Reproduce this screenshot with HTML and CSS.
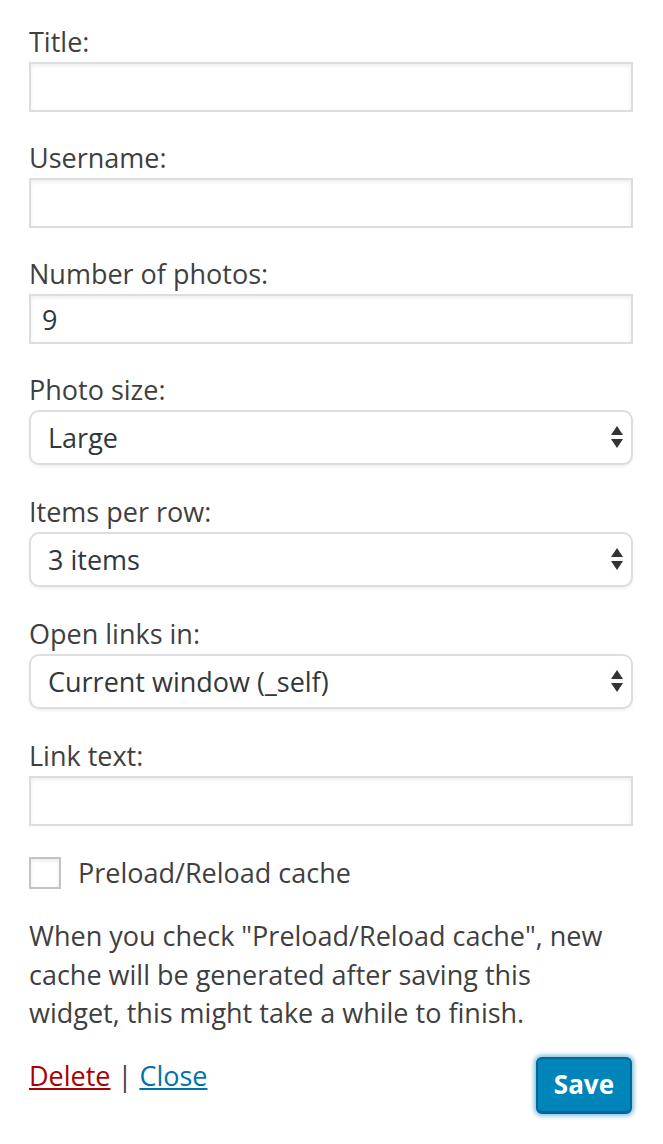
FILE: index.html
```html
<!DOCTYPE html>
<html lang="en">
<head>
  <meta charset="UTF-8" />
  <title>Instagram Widget</title>
  <link rel="stylesheet" href="styles.css">
</head>
<body>
  <div class="widget-form">
    <p class="field">
      <label for="title">Title:</label>
      <input type="text" id="title" class="text-input" />
    </p>
    <p class="field">
      <label for="username">Username:</label>
      <input type="text" id="username" class="text-input" />
    </p>
    <p class="field">
      <label for="number">Number of photos:</label>
      <input type="text" id="number" class="text-input" value="9" />
    </p>
    <p class="field field-select">
      <label for="size">Photo size:</label>
      <span class="select-wrap">
        <select id="size"><option>Large</option></select>
        <svg class="select-arrows" width="12" height="24" viewBox="0 0 12 24"><path d="M6 0 L12 9 L0 9 Z M0 13 L12 13 L6 22 Z" fill="#333"/></svg>
      </span>
    </p>
    <p class="field field-select">
      <label for="per-row">Items per row:</label>
      <span class="select-wrap">
        <select id="per-row"><option>3 items</option></select>
        <svg class="select-arrows" width="12" height="24" viewBox="0 0 12 24"><path d="M6 0 L12 9 L0 9 Z M0 13 L12 13 L6 22 Z" fill="#333"/></svg>
      </span>
    </p>
    <p class="field field-select">
      <label for="target">Open links in:</label>
      <span class="select-wrap">
        <select id="target"><option>Current window (_self)</option></select>
        <svg class="select-arrows" width="12" height="24" viewBox="0 0 12 24"><path d="M6 0 L12 9 L0 9 Z M0 13 L12 13 L6 22 Z" fill="#333"/></svg>
      </span>
    </p>
    <p class="field">
      <label for="link">Link text:</label>
      <input type="text" id="link" class="text-input" />
    </p>
    <p class="check-row">
      <input type="checkbox" id="cache" class="checkbox" />
      <label for="cache">Preload/Reload cache</label>
    </p>
    <p class="note">When you check "Preload/Reload cache", new cache will be generated after saving this widget, this might take a while to finish.</p>
    <div class="actions">
      <div class="links">
        <a href="#" class="delete-link">Delete</a> | <a href="#" class="close-link">Close</a>
      </div>
      <button type="button" class="save-btn">Save</button>
    </div>
  </div>
</body>
</html>
```
FILE: styles.css
```css
body {
  margin: 0;
  background: #fff;
  font-family: 'Open Sans', sans-serif;
  font-size: 27px;
  color: #3f3f3f;
}
.widget-form {
  padding: 24px 30px 0 29px;
}
.field {
  margin: 0 0 28px;
}
.field-select {
  margin-bottom: 29px;
}
.field label {
  display: block;
  line-height: 36px;
  margin-bottom: 2px;
}
.text-input {
  display: block;
  box-sizing: border-box;
  width: 100%;
  height: 50px;
  margin: 0;
  padding: 0 11px;
  border: 2px solid #ddd;
  border-radius: 0;
  box-shadow: inset 0 2px 4px rgba(0,0,0,0.07);
  font-family: inherit;
  font-size: 27px;
  color: #32373c;
  outline: none;
}
.select-wrap {
  display: block;
  position: relative;
}
.select-wrap select {
  display: block;
  box-sizing: border-box;
  width: 100%;
  height: 55px;
  margin: 0;
  padding: 0 40px 0 17px;
  border: 2px solid #ddd;
  border-radius: 10px;
  box-shadow: 0 2px 3px rgba(0,0,0,0.06);
  background: #fff;
  appearance: none;
  -webkit-appearance: none;
  font-family: inherit;
  font-size: 27px;
  color: #32373c;
  outline: none;
}
.select-arrows {
  position: absolute;
  right: 10px;
  top: 16px;
  pointer-events: none;
}
.check-row {
  display: flex;
  align-items: center;
  margin: 29px 0 0;
  line-height: 36px;
}
.checkbox {
  appearance: none;
  -webkit-appearance: none;
  box-sizing: border-box;
  width: 32px;
  height: 32px;
  margin: 0 17px 0 0;
  border: 2px solid #c3c3c3;
  background: #fff;
  box-shadow: inset 0 2px 4px rgba(0,0,0,0.08);
}
.note {
  margin: 26px 0 0;
  padding-right: 24px;
  line-height: 38.5px;
}
.actions {
  display: flex;
  justify-content: space-between;
  align-items: flex-start;
  margin-top: 24px;
  padding-bottom: 30px;
}
.links {
  line-height: 38px;
  color: #3f3f3f;
}
.delete-link {
  color: #a00;
}
.close-link {
  color: #0073aa;
}
.save-btn {
  height: 57px;
  margin: 0 1px 0 0;
  padding: 0 16px 2px;
  border: 2px solid #006799;
  border-bottom-width: 3px;
  border-radius: 6px;
  background: #0085ba;
  box-shadow: 0 0 4px 2px rgba(30,140,190,0.55);
  color: #fff;
  font-family: inherit;
  font-size: 26px;
  font-weight: 700;
  cursor: pointer;
}
```
